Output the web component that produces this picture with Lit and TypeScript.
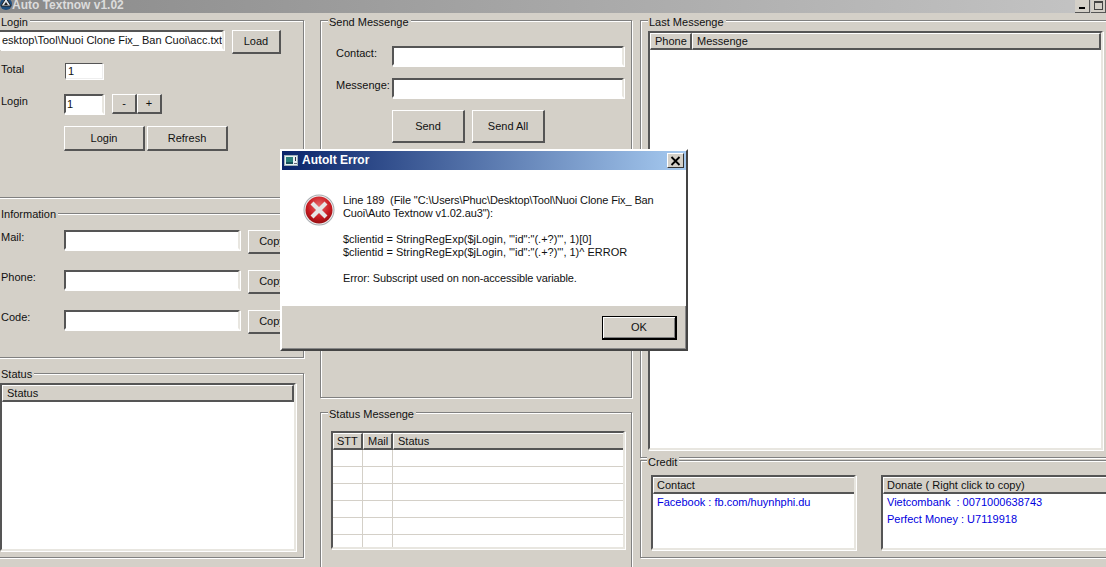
import { LitElement, html, css } from "lit";
import { customElement } from "lit/decorators.js";

@customElement("app-root")
export class AppRoot extends LitElement {
  static styles = css`
    :host { display: block; width: 1106px; height: 567px; overflow: hidden; position: relative; background: #d4d0c8;
      font-family: "Liberation Sans", Arial, sans-serif; font-size: 11px; line-height: 13px; color: #111; }
    * { box-sizing: border-box; }
    .titlebar { height: 13px; display: flex; align-items: flex-start; overflow: hidden; background: linear-gradient(90deg, #8a8a8a, #c4c4c4); }
    .tlogo { flex: none; margin: -3px 0 0 0; }
    .ttext { font-weight: bold; font-size: 12px; line-height: 10px; color: #dcdcdc; flex: 1; white-space: nowrap; }
    .wbtn { width: 15px; height: 13px; background: #d4d0c8; border-right: 1px solid #555; border-bottom: 1px solid #555; margin-right: 1px; flex: none; display: flex; justify-content: center; align-items: flex-end; padding-bottom: 3px; }
    .wbtn:last-child { margin-right: 0; }
    .wbtn i { display: block; width: 6px; height: 2px; background: #000; }
    .wbtn b { display: block; width: 9px; height: 9px; border: 1px solid #444; border-top-width: 2px; margin-bottom: -1px; }
    .main { display: flex; padding-top: 7px; }
    .col { display: flex; flex-direction: column; flex: none; }
    .c1 { margin-left: -5px; width: 309px; }
    .c2 { width: 312px; margin-left: 16px; }
    .c3 { width: 480px; margin-left: 8px; }
    .group { position: relative; border: 1px solid #808080; box-shadow: inset 1px 1px 0 #fff, 1px 1px 0 #fff; flex: none; }
    .legend { position: absolute; top: -5px; left: 4px; background: #d4d0c8; padding: 0 2px 0 1px; white-space: nowrap; }
    .g-login { height: 178px; padding: 9px 0 0 4px; }
    .g-info { height: 145px; margin-top: 15px; padding: 16px 0 0 4px; }
    .g-status { height: 185px; margin-top: 15px; padding: 9px 0 0 4px; }
    .g-info .legend, .g-status .legend { top: -6px; }
    .g-send { height: 378px; padding: 25px 0 0 15px; }
    .g-smsg { height: 170px; margin-top: 14px; padding: 18px 0 0 10px; }
    .g-last { height: 438px; padding: 10px 0 0 7px; }
    .g-credit { height: 98px; margin-top: 2px; padding: 14px 0 0 10px; display: flex; gap: 25px; }
    .g-send .legend, .g-smsg .legend, .g-last .legend { left: 7px; }
    .g-credit .legend { left: 6px; }
    .row { display: flex; align-items: flex-start; }
    .input { background: #fff; border: 2px solid #555; border-right-color: #e8e6e0; border-bottom-color: #fff; height: 20px; box-shadow: 1px 1px 0 #fff; padding: 1px; line-height: 14px; overflow: hidden; white-space: nowrap; flex: none; }
    .acc { width: 224px; border-left: none; padding-left: 2px; }
    .btn { background: #d4d0c8; border: 1px solid #fff; border-right: 2px solid #555; border-bottom: 2px solid #555; display: flex; align-items: center; justify-content: center; flex: none; height: 24px; }
    .load { width: 49px; margin-left: 8px; }
    .r-total { margin-top: 9px; }
    .r-login { margin-top: 15px; }
    .r-act { margin-top: 12px; padding-left: 64px; gap: 2px; }
    .lab-t { width: 65px; padding-left: 1px; }
    .lab-l { width: 64px; padding: 1px 0 0 1px; }
    .total { width: 38px; height: 16px; border-width: 1px; line-height: 12px; padding: 1px 2px; border-color: #555 #eee #eee #555; }
    .loginc { width: 40px; padding-left: 1px; }
    .pm { width: 25px; height: 20px; }
    .pm-f { margin-left: 8px; }
    .la { width: 81px; height: 25px; }
    .r-info { height: 40px; }
    .lab-i { width: 64px; padding: 1px 0 0 1px; }
    .mail { width: 176px; }
    .copy { width: 49px; margin-left: 8px; }
    .lv { background: #fff; border: 2px solid #555; border-right-color: #e8e6e0; border-bottom-color: #e8e6e0; box-shadow: 1px 1px 0 #fff; overflow: hidden; flex: none; }
    .hd { display: flex; height: 17px; }
    .th { background: #d4d0c8; border: 1px solid #fff; border-right: 2px solid #555; border-bottom: 2px solid #555; padding: 1px 0 0 4px; white-space: nowrap; line-height: 13px; flex: none; height: 17px; overflow: hidden; }
    .lv-status { width: 296px; height: 168px; }
    .th-status { width: 292px; }
    .r-send { margin-bottom: 12px; }
    .lab-s { width: 56px; padding: 1px 0 0 0; }
    .send-in { width: 232px; }
    .acts { padding-left: 56px; gap: 7px; }
    .sb { width: 73px; height: 33px; }
    .lv-smsg { width: 294px; height: 118px; }
    .t-stt { width: 30px; padding-left: 3px; }
    .t-mail { width: 30px; }
    .t-st { width: 233px; }
    .srow { display: flex; height: 17px; border-bottom: 1px solid #d4d0c8; }
    .srow i { display: block; height: 100%; border-right: 1px solid #d4d0c8; flex: none; width: 30px; }
    .lv-last { width: 455px; height: 419px; }
    .t-ph { width: 42px; }
    .t-msg { width: 409px; }
    .lv-con { width: 205px; height: 75px; }
    .lv-don { width: 240px; height: 75px; }
    .t-wide { width: 240px; padding-left: 3px; }
    .blue { color: #0000e0; padding: 0 0 0 4px; line-height: 17px; white-space: nowrap; }
    .dialog { position: absolute; left: 280px; top: 149px; width: 408px; height: 202px; background: #d4d0c8; border: 2px solid #fff; border-right-color: #444; border-bottom-color: #444; box-shadow: inset -1px -1px 0 #888; display: flex; flex-direction: column; }
    .d-title { height: 19px; background: linear-gradient(90deg, #0a246a, #a6caf0); display: flex; align-items: center; color: #fff; font-weight: bold; font-size: 12px; padding: 0 2px; flex: none; }
    .d-title span { flex: 1; margin-left: 4px; }
    .d-close { width: 17px; height: 15px; background: #d4d0c8; border: 1px solid #fff; border-right-color: #333; border-bottom-color: #333; display: flex; align-items: center; justify-content: center; }
    .d-body { height: 136px; background: #fff; display: flex; padding: 24px 0 0 21px; flex: none; }
    .err { flex: none; }
    .d-msg { margin-left: 8px; width: 325px; color: #111; }
    .d-msg p { margin: 0 0 13px; }
    .d-msg .tight { letter-spacing: -0.12px; }
    .d-foot { display: flex; justify-content: flex-end; padding: 10px 9px 0 0; }
    .ok { width: 75px; height: 24px; background: #d4d0c8; border: 2px solid #000; border-left-width: 1px; border-top-width: 1px; box-shadow: inset 1px 1px 0 #fff, inset -1px -1px 0 #808080; display: flex; align-items: center; justify-content: center; }
  `;

  render() {
    return html`
      <div class="titlebar">
        <svg class="tlogo" width="12" height="14" viewBox="0 0 12 14"><circle cx="6" cy="7" r="6" fill="#1f4f7f"/><path d="M6 1 L11 9 H1 Z" fill="#dfe6ee" stroke="#222" stroke-width="1"/><path d="M6 5 L8 8 H4 Z" fill="#222"/></svg>
        <div class="ttext">Auto Textnow v1.02</div>
        <div class="wbtn"><i></i></div>
        <div class="wbtn"><b></b></div>
      </div>
      <div class="main">
        <div class="col c1">
          <div class="group g-login">
            <div class="legend">Login</div>
            <div class="row">
              <div class="input acc">esktop\\Tool\\Nuoi Clone Fix_ Ban Cuoi\\acc.txt</div>
              <div class="btn load">Load</div>
            </div>
            <div class="row r-total"><div class="lab-t">Total</div><div class="input total">1</div></div>
            <div class="row r-login"><div class="lab-l">Login</div><div class="input loginc">1</div><div class="btn pm pm-f">-</div><div class="btn pm">+</div></div>
            <div class="row r-act"><div class="btn la">Login</div><div class="btn la">Refresh</div></div>
          </div>
          <div class="group g-info">
            <div class="legend">Information</div>
            <div class="row r-info"><div class="lab-i">Mail:</div><div class="input mail"></div><div class="btn copy">Copy</div></div>
            <div class="row r-info"><div class="lab-i">Phone:</div><div class="input mail"></div><div class="btn copy">Copy</div></div>
            <div class="row r-info"><div class="lab-i">Code:</div><div class="input mail"></div><div class="btn copy">Copy</div></div>
          </div>
          <div class="group g-status">
            <div class="legend">Status</div>
            <div class="lv lv-status"><div class="hd"><div class="th th-status">Status</div></div></div>
          </div>
        </div>
        <div class="col c2">
          <div class="group g-send">
            <div class="legend">Send Messenge</div>
            <div class="row r-send"><div class="lab-s">Contact:</div><div class="input send-in"></div></div>
            <div class="row r-send"><div class="lab-s">Messenge:</div><div class="input send-in"></div></div>
            <div class="row acts"><div class="btn sb">Send</div><div class="btn sb">Send All</div></div>
          </div>
          <div class="group g-smsg">
            <div class="legend">Status Messenge</div>
            <div class="lv lv-smsg">
              <div class="hd"><div class="th t-stt">STT</div><div class="th t-mail">Mail</div><div class="th t-st">Status</div></div>
              ${[0, 1, 2, 3, 4, 5].map(() => html`<div class="srow"><i></i><i></i></div>`)}
            </div>
          </div>
        </div>
        <div class="col c3">
          <div class="group g-last">
            <div class="legend">Last Messenge</div>
            <div class="lv lv-last"><div class="hd"><div class="th t-ph">Phone</div><div class="th t-msg">Messenge</div></div></div>
          </div>
          <div class="group g-credit">
            <div class="legend">Credit</div>
            <div class="lv lv-con"><div class="hd"><div class="th t-wide">Contact</div></div><div class="blue">Facebook : fb.com/huynhphi.du</div></div>
            <div class="lv lv-don"><div class="hd"><div class="th t-wide">Donate ( Right click to copy)</div></div><div class="blue">Vietcombank &nbsp;: 0071000638743<br>Perfect Money : U7119918</div></div>
          </div>
        </div>
      </div>
      <div class="dialog">
        <div class="d-title">
          <svg width="14" height="11" viewBox="0 0 14 11"><rect x="0" y="0" width="14" height="11" fill="#e6eef2"/><rect x="0.5" y="0.5" width="13" height="10" fill="none" stroke="#9fb0b8"/><rect x="2" y="2" width="7" height="7" fill="#2a7f7a"/><rect x="2" y="7" width="7" height="2" fill="#16505a"/><rect x="11" y="2" width="1" height="4" fill="#334"/><rect x="10" y="8" width="3" height="1" fill="#667"/></svg>
          <span>AutoIt Error</span>
          <div class="d-close"><svg width="11" height="10" viewBox="0 0 11 10"><path d="M1.5 1 L9.5 9 M9.5 1 L1.5 9" stroke="#000" stroke-width="1.8"/></svg></div>
        </div>
        <div class="d-body">
          <svg class="err" width="32" height="32" viewBox="0 0 32 32">
            <defs><radialGradient id="rg" cx="50%" cy="35%" r="70%"><stop offset="0" stop-color="#e8686a"/><stop offset="0.6" stop-color="#c81a20"/><stop offset="1" stop-color="#8c0c10"/></radialGradient></defs>
            <circle cx="16" cy="16" r="15.5" fill="#a8acb0"/><circle cx="16" cy="16" r="14.5" fill="#f0f0f0"/><circle cx="16" cy="16" r="13.5" fill="url(#rg)"/>
            <path d="M10.5 10.5 L21.5 21.5 M21.5 10.5 L10.5 21.5" stroke="#e6e6e6" stroke-width="4.2" stroke-linecap="square"/>
          </svg>
          <div class="d-msg">
            <p class="tight">Line 189 &nbsp;(File "C:\\Users\\Phuc\\Desktop\\Tool\\Nuoi Clone Fix_ Ban Cuoi\\Auto Textnow v1.02.au3"):</p>
            <p>$clientid = StringRegExp($jLogin, '"id":"(.+?)"', 1)[0]<br>$clientid = StringRegExp($jLogin, '"id":"(.+?)"', 1)^ ERROR</p>
            <p class="tight">Error: Subscript used on non-accessible variable.</p>
          </div>
        </div>
        <div class="d-foot"><div class="ok">OK</div></div>
      </div>
    `;
  }
}
